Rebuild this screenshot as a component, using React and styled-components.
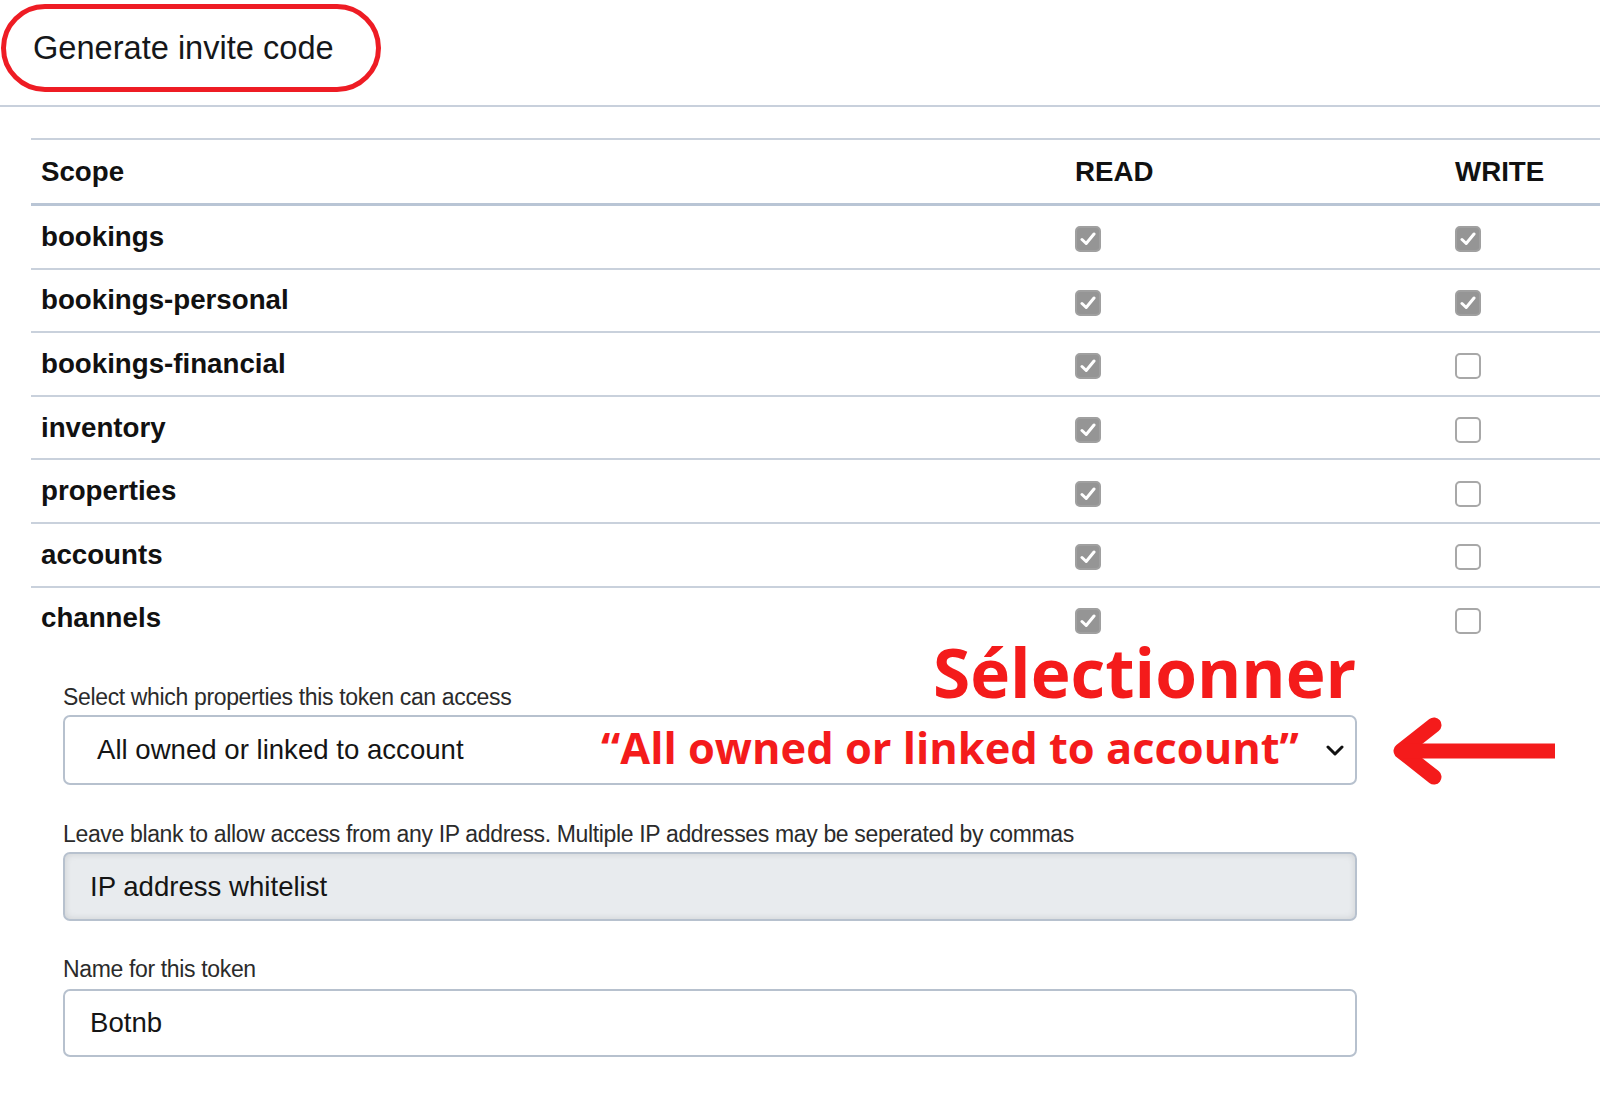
import React from 'react';
import styled, { createGlobalStyle } from 'styled-components';

const GlobalStyle = createGlobalStyle`
  body {
    margin: 0;
    background: #ffffff;
    font-family: "Liberation Sans", Arial, sans-serif;
    color: #111;
  }
`

const Page = styled.div`
  width: 1600px;
  min-height: 1104px;
  overflow: hidden;
`
const TopBar = styled.div`
  height: 107px;
  border-bottom: 2px solid #c8d0dc;
  box-sizing: border-box;
  padding: 4px 0 0 1px;
`
const Pill = styled.div`
  width: 380px;
  height: 88px;
  box-sizing: border-box;
  border: 5px solid #ee1c24;
  border-radius: 45px;
  display: flex;
  align-items: center;
  padding-left: 27px;
  font-size: 32.6px;
  color: #15171a;
`
const Table = styled.div`
  margin: 31px 0 0 31px;
  border-top: 2px solid #c9d1dc;
`
const Row = styled.div`
  display: grid;
  grid-template-columns: 1044px 380px 1fr;
  align-items: center;
  height: ${p => (p.$head ? '63px' : '61.6px')};
  border-bottom: ${p => (p.$head ? '3px solid #b9c5d5' : p.$last ? 'none' : '2px solid #c9d1dc')};
  font-weight: bold;
  font-size: 27.7px;
  color: #111;
`
const Scope = styled.div`
  padding-left: 10px;
`
const Box = styled.span`
  display: flex;
  align-items: center;
  justify-content: center;
  margin-top: 5px;
  width: 26px;
  height: 26px;
  box-sizing: border-box;
  border-radius: 5px;
  background: ${p => (p.$on ? '#959595' : '#fff')};
  border: 2px solid ${p => (p.$on ? '#a0a0a0' : '#a8a8a8')};
`
const Form = styled.div`
  padding: 35px 0 40px 63px;
  width: 1294px;
`
const Field = styled.div`
  position: relative;
  margin-bottom: ${p => p.$gap || '36px'};
`
const Label = styled.div`
  font-size: 23px;
  line-height: 26px;
  color: #2b2b2b;
  margin-bottom: ${p => p.$gap || '5px'};
  letter-spacing: -0.35px;
`
const Control = styled.div`
  position: relative;
  height: ${p => p.$h || '69px'};
  box-sizing: border-box;
  border: 2px solid #b7c1ce;
  border-radius: 7px;
  background: ${p => (p.$muted ? '#e8ebee' : '#fff')};
  box-shadow: ${p => (p.$muted ? 'inset 0 0 7px rgba(0,0,0,0.12)' : 'none')};
  display: flex;
  align-items: center;
  justify-content: space-between;
  padding: 0 11px 0 ${p => p.$pad || '25px'};
  font-size: 27.6px;
  color: #151515;
`
const Note = styled.div`
  position: absolute;
  font-family: "Open Sans", "Liberation Sans", sans-serif;
  font-weight: 700;
  color: #f41b1b;
  white-space: nowrap;
  left: ${p => p.$left};
  top: ${p => p.$top};
  font-size: ${p => p.$size};
  line-height: ${p => p.$size};
`
const Arrow = styled.svg`
  position: absolute;
  left: 1322px;
  top: -3px;
`

const scopes = [
  ['bookings', true, true],
  ['bookings-personal', true, true],
  ['bookings-financial', true, false],
  ['inventory', true, false],
  ['properties', true, false],
  ['accounts', true, false],
  ['channels', true, false],
]

const Check = ({ on }) => (
  <Box $on={on}>
    {on && (
      <svg width="16" height="14" viewBox="0 0 16 14">
        <path d="M2 7.5 L6.2 11.5 L14 2" fill="none" stroke="#fff" strokeWidth="3" strokeLinecap="round" strokeLinejoin="round" />
      </svg>
    )}
  </Box>
)

export default function App() {
  return (
    <Page>
      <GlobalStyle />
      <TopBar>
        <Pill>Generate invite code</Pill>
      </TopBar>
      <Table>
        <Row $head>
          <Scope>Scope</Scope>
          <div>READ</div>
          <div>WRITE</div>
        </Row>
        {scopes.map(([name, r, w], i) => (
          <Row key={name} $last={i === scopes.length - 1}>
            <Scope>{name}</Scope>
            <div><Check on={r} /></div>
            <div><Check on={w} /></div>
          </Row>
        ))}
      </Table>
      <Form>
        <Field>
          <Label>Select which properties this token can access</Label>
          <Control $h="70px" $pad="32px">
            <span>All owned or linked to account</span>
            <svg width="18" height="11" viewBox="0 0 18 11">
              <path d="M2 2 L9 9 L16 2" fill="none" stroke="#111" strokeWidth="3" strokeLinecap="round" strokeLinejoin="round" />
            </svg>
            <Note $left="868px" $top="-78px" $size="67.5px">Sélectionner</Note>
            <Note $left="536px" $top="9px" $size="43.4px">“All owned or linked to account”</Note>
            <Arrow width="172" height="76" viewBox="0 0 172 76">
              <path d="M47 11 L14 37 L47 63" fill="none" stroke="#f41b1b" strokeWidth="15" strokeLinecap="round" strokeLinejoin="round" />
              <path d="M16 37 L168 37" fill="none" stroke="#f41b1b" strokeWidth="15" />
            </Arrow>
          </Control>
        </Field>
        <Field $gap="35px">
          <Label>Leave blank to allow access from any IP address. Multiple IP addresses may be seperated by commas</Label>
          <Control $muted>IP address whitelist</Control>
        </Field>
        <Field>
          <Label $gap="7px">Name for this token</Label>
          <Control $h="68px">Botnb</Control>
        </Field>
      </Form>
    </Page>
  )
}
